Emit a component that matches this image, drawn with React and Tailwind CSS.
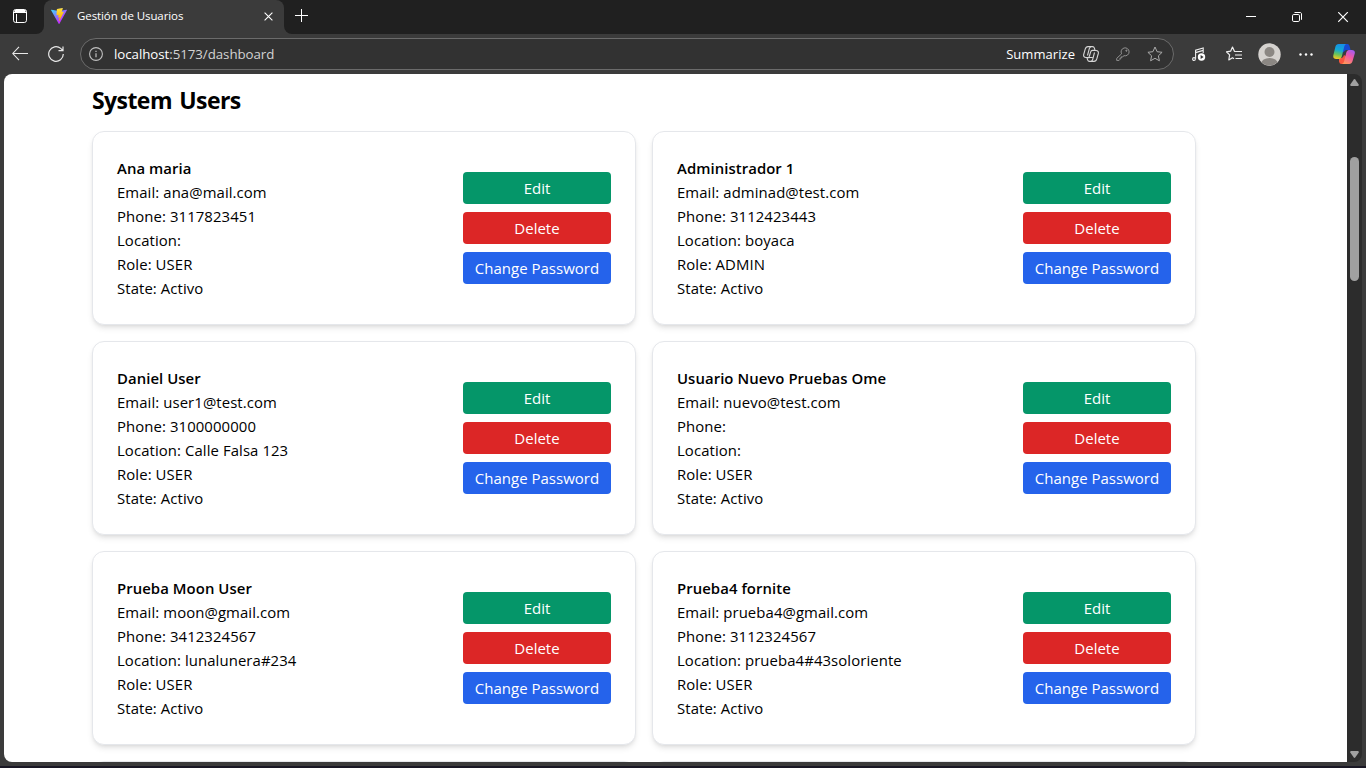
import React from "react";

const users = [
  { name: "Ana maria", email: "ana@mail.com", phone: "3117823451", location: "", role: "USER" },
  { name: "Administrador 1", email: "adminad@test.com", phone: "3112423443", location: "boyaca", role: "ADMIN" },
  { name: "Daniel User", email: "user1@test.com", phone: "3100000000", location: "Calle Falsa 123", role: "USER" },
  { name: "Usuario Nuevo Pruebas Ome", email: "nuevo@test.com", phone: "", location: "", role: "USER" },
  { name: "Prueba Moon User", email: "moon@gmail.com", phone: "3412324567", location: "lunalunera#234", role: "USER" },
  { name: "Prueba4 fornite", email: "prueba4@gmail.com", phone: "3112324567", location: "prueba4#43soloriente", role: "USER" },
];

const card = "h-[194px] shrink-0 rounded-xl border border-gray-200 bg-white p-6 shadow-md";
const button = "h-8 w-[148px] rounded text-center leading-8 text-white whitespace-nowrap";

function UserCard({ user }) {
  return (
    <article className={card + " flex items-center justify-between"}>
      <div className="whitespace-nowrap leading-6 tracking-[0.006em]">
        <h3 className="font-semibold tracking-[0.004em]">{user.name}</h3>
        <p>Email: {user.email}</p>
        <p>Phone: {user.phone}</p>
        <p>Location: {user.location}</p>
        <p>Role: {user.role}</p>
        <p>State: Activo</p>
      </div>
      <div className="flex flex-col gap-2 text-[15px]">
        <button className={button + " bg-[#059669]"}>Edit</button>
        <button className={button + " bg-[#dc2626]"}>Delete</button>
        <button className={button + " bg-[#2563eb]"}>Change Password</button>
      </div>
    </article>
  );
}

function ViteLogo() {
  return (
    <svg className="h-4 w-4" viewBox="0 0 256 257">
      <defs>
        <linearGradient id="viteBody" x1="-.8%" x2="57.6%" y1="7.6%" y2="78.4%">
          <stop offset="0" stopColor="#41D1FF" />
          <stop offset="1" stopColor="#BD34FE" />
        </linearGradient>
        <linearGradient id="viteBolt" x1="43.4%" x2="50.3%" y1="2.2%" y2="89%">
          <stop offset="0" stopColor="#FFEA83" />
          <stop offset=".08" stopColor="#FFDD35" />
          <stop offset="1" stopColor="#FFA800" />
        </linearGradient>
      </defs>
      <path fill="url(#viteBody)" d="M255.153 37.938 134.897 252.976c-2.483 4.44-8.862 4.466-11.382.048L.875 37.958c-2.746-4.814 1.371-10.646 6.827-9.67l120.385 21.517a6.537 6.537 0 0 0 2.322-.004l117.867-21.483c5.438-.991 9.574 4.796 6.877 9.62Z" />
      <path fill="url(#viteBolt)" d="M185.432.063 96.44 17.501a3.268 3.268 0 0 0-2.634 3.014l-5.474 92.456a3.268 3.268 0 0 0 3.997 3.378l24.777-5.718c2.318-.535 4.413 1.507 3.936 3.838l-7.361 36.047c-.495 2.426 1.782 4.5 4.151 3.78l15.304-4.649c2.372-.72 4.652 1.36 4.15 3.788l-11.698 56.621c-.732 3.542 3.979 5.473 5.943 2.437l1.313-2.028 72.516-144.72c1.215-2.423-.88-5.186-3.54-4.672l-25.505 4.922c-2.396.462-4.435-1.77-3.759-4.114l16.646-57.705c.677-2.35-1.37-4.583-3.769-4.113Z" />
    </svg>
  );
}

function TitleBar() {
  return (
    <div className="flex h-[34px] bg-[#3b3b3b] text-white">
      <div className="flex w-11 items-center justify-center rounded-br-lg bg-[#202020] pb-[2px] pr-1">
        <svg className="h-[14px] w-[14px]" viewBox="0 0 14 14" fill="none" stroke="currentColor">
          <rect x=".5" y=".5" width="13" height="13" rx="2.2" />
          <path d="M1 3.5h12" />
          <path d="M1.500 2h11" strokeWidth="2" />
          <path d="M3.500 5v8" />
        </svg>
      </div>
      <div className="flex w-[240px] bg-[#202020]">
        <div className="flex w-full items-center rounded-t-lg bg-[#3b3b3b] pb-[2px] pl-[7px] pr-[11px]">
          <ViteLogo />
          <span className="ml-[10px] grow whitespace-nowrap text-[11.500px] leading-4 tracking-[-0.008em]">Gestión de Usuarios</span>
          <svg className="h-[9px] w-[9px]" viewBox="0 0 9 9" stroke="currentColor" strokeWidth="1.1">
            <path d="m.6.6 7.8 7.8M8.4.6.6 8.4" />
          </svg>
        </div>
      </div>
      <div className="flex grow rounded-bl-lg bg-[#202020]">
        <svg className="ml-[11px] mt-[9px] h-[13px] w-[13px]" viewBox="0 0 13 13" stroke="currentColor">
          <path d="M6.5 0v13M0 6.5h13" />
        </svg>
        <div className="ml-auto flex pr-[17px] pt-3">
          <svg className="h-[11px] w-[11px]" viewBox="0 0 11 11" stroke="currentColor">
            <path d="M0 4.500h10" />
          </svg>
          <svg className="ml-[35px] h-[11px] w-[11px]" viewBox="0 0 11 11" fill="none" stroke="currentColor">
            <rect x=".5" y="2.5" width="7" height="7" rx="1.3" />
            <path d="M2.500.5H8c.9 0 1.500.6 1.500 1.500v5.800" />
          </svg>
          <svg className="ml-[35px] h-[11px] w-[11px]" viewBox="0 0 11 11" stroke="currentColor" strokeWidth="1.2">
            <path d="m.2.2 9.600 9.600M9.800.2.2 9.800" />
          </svg>
        </div>
      </div>
    </div>
  );
}

const starPath = "m8 1 2.1 4.7 5 .6-3.700 3.500 1 5L8 12.300l-4.400 2.500 1-5L.9 6.300l5-.6z";

function AddressBar() {
  return (
    <div className="flex h-10 items-center bg-[#3b3b3b] text-white">
      <svg className="ml-3 h-4 w-4" viewBox="0 0 16 16" fill="none" stroke="#e8e8e8" strokeWidth="1.1">
        <path d="M7 .8 .8 7.500 7 14.200M.8 7.500H16" />
      </svg>
      <svg className="ml-5 h-4 w-4" viewBox="0 0 16 16" fill="none" stroke="#e8e8e8" strokeWidth="1.2">
        <path d="M15.300 8A7.300 7.300 0 1 1 12.700 2.400L15 4.600M15 .4v4.300h-4.500" />
      </svg>
      <div className="ml-4 flex h-8 w-[1094px] items-center rounded-full border border-[#6b6b6b] bg-[#323232] pl-2 pr-[10px]">
        <svg className="h-[14px] w-[14px]" viewBox="0 0 14 14" fill="none" stroke="#c0c0c0">
          <circle cx="7" cy="7" r="6.400" strokeWidth="1.100" />
          <path d="M7 6.200v4M7 3.700v1.300" strokeWidth="1.200" />
        </svg>
        <span className="ml-[11px] whitespace-nowrap text-[13.300px] leading-5 tracking-[-0.004em]">
          localhost<span className="text-[#d2d2d2]">:5173/dashboard</span>
        </span>
        <span className="ml-auto whitespace-nowrap text-[13px] leading-5 tracking-[0.004em]">Summarize</span>
        <svg className="ml-2 h-4 w-4" viewBox="0 0 16 16" fill="none" stroke="#d6d6d6" strokeWidth="1.100" strokeLinejoin="round">
          <path d="M5.200 11.500H3C1.200 11.500.3 10.200.7 8.500l1.500-5.400C2.700 1.300 3.500.6 5 .6h4.500c1.100 0 1.600.5 1.900 1.500l.7 2.300H9.500c-1.100 0-1.600.6-1.900 1.700L6.400 10c-.2 1-.5 1.500-1.200 1.500z" />
          <path d="M10.800 4.500H13c1.800 0 2.700 1.300 2.300 3l-1.500 5.400c-.5 1.800-1.300 2.500-2.800 2.500H6.500c-1.100 0-1.600-.5-1.900-1.500l-.7-2.300h2.600M9.500 11.500H6M8 .7C7 .9 6.600 1.600 6.300 2.700L4.500 9.500M8 15.300c1-.2 1.400-.9 1.700-2l1.800-6.800" />
        </svg>
        <svg className="ml-[17px] h-[14px] w-[14px]" viewBox="0 0 14 14" fill="none" stroke="#929292" strokeLinejoin="round">
          <path d="M5.600 6.800A4 4 0 1 1 8 8.700l-1.300 1.100H5.300v1.300H4v1.300l-.9 1H.7v-2z" />
          <circle cx="10.400" cy="3.700" r=".6" fill="#929292" />
        </svg>
        <svg className="ml-[17px] h-4 w-4" viewBox="0 0 16 16" fill="none" stroke="#ababab" strokeLinejoin="round">
          <path d={starPath} />
        </svg>
      </div>
      <svg className="ml-[18px] h-[14px] w-[14px]" viewBox="0 0 14 14" fill="none" stroke="#efefef" strokeWidth="1.100">
        <path d="M3.600 11.800V3.200L11.200 1v5M3.600 5.600l7.600-2.200" />
        <circle cx="2" cy="12" r="1.400" />
        <circle cx="9.500" cy="10" r="3.700" fill="#fff" stroke="none" />
        <path d="m8.600 8 3 2-3 2z" fill="#333" stroke="none" />
      </svg>
      <svg className="ml-5 h-4 w-4" viewBox="0 0 16 16" fill="none" stroke="#efefef" strokeWidth="1.200" strokeLinejoin="round">
        <path d="m10 5.500-1.600-.2L6.500 1 4.600 5.200l-4.200.6 3.200 3.100L2.800 14l3.700-2.200 1.500.9M10 5.500h6M9 9h7M9.500 12.500H16" />
      </svg>
      <svg className="ml-4 h-[23px] w-[23px]" viewBox="0 0 23 23">
        <defs><clipPath id="avatar"><circle cx="11.500" cy="11.500" r="11" /></clipPath></defs>
        <circle cx="11.500" cy="11.500" r="11.200" fill="#d5d2cf" />
        <circle cx="11.500" cy="9" r="5" fill="#8b8783" />
        <ellipse cx="11.500" cy="20.300" rx="8.200" ry="5.300" fill="#8b8783" clipPath="url(#avatar)" />
      </svg>
      <svg className="ml-[18px] h-[3px] w-[14px]" viewBox="0 0 14 3" fill="#fff">
        <circle cx="1.500" cy="1.500" r="1.200" /><circle cx="7" cy="1.500" r="1.200" /><circle cx="12.500" cy="1.500" r="1.200" />
      </svg>
      <svg className="ml-5 h-[22px] w-[22px]" viewBox="0 0 22 22">
        <defs>
          <linearGradient id="coolRibbon" x1=".5" x2=".3" y1="0" y2="1">
            <stop offset="0" stopColor="#168fe8" /><stop offset=".4" stopColor="#13a9d4" /><stop offset=".7" stopColor="#69c35a" /><stop offset="1" stopColor="#f6c921" />
          </linearGradient>
          <linearGradient id="warmRibbon" x1=".8" x2=".3" y1="0" y2="1">
            <stop offset="0" stopColor="#a35cf3" /><stop offset=".45" stopColor="#ef57a7" /><stop offset="1" stopColor="#ff9659" />
          </linearGradient>
        </defs>
        <path fill="#1749d2" d="M10 1h4c1.400 0 2.100.6 2.500 1.900L17.600 7h-3.800c-1.700 0-2.500 1-3 2.500L9.500 8z" />
        <path fill="#f8553d" d="M6 15h2c1.500 0 2.400-1 3-3l3 2-1.500 5c-.5 1.500-1 2-2.500 2H8.500c-1.500 0-2-.8-2.500-2.500z" />
        <path fill="url(#coolRibbon)" d="M5.800 1H13.500c-1.300.3-1.900 1.300-2.300 2.700L8.900 13.200C8.300 15.400 7 16 5.200 16H3.300C.8 16-.2 14.400.4 12L2.400 3.800C3 1.800 3.900 1 5.800 1z" />
        <path fill="url(#warmRibbon)" d="M16.200 21H8.800c1.300-.3 1.900-1.200 2.300-2.700l2.200-8.700C13.900 7.600 15.200 7 17 7h1.800c2.500 0 3.500 1.500 2.900 3.800l-2.200 7.500c-.7 2-1.500 2.700-3.300 2.700z" />
      </svg>
    </div>
  );
}

export default function App() {
  return (
    <div className="flex h-[768px] w-[1366px] flex-col overflow-hidden bg-[#3b3b3b] font-['Open_Sans','Noto_Sans',sans-serif]">
      <TitleBar />
      <AddressBar />
      <div className="mx-1 flex h-[688px] overflow-hidden rounded-lg">
        <main className="h-full w-[1343px] overflow-hidden bg-white pl-[88px] pt-[10px] text-[14.900px] text-black">
          <h2 className="mb-[15px] whitespace-nowrap text-[23px] font-bold leading-8 tracking-[-0.025em] [word-spacing:2px]">System Users</h2>
          <div className="grid w-[1104px] grid-cols-2 gap-4">
            {users.map((user) => <UserCard key={user.email} user={user} />)}
            <article className={card} />
            <article className={card} />
          </div>
        </main>
        <div className="flex w-[15px] flex-col items-center bg-[#2c2c2c] pb-1 pt-[5px]">
          <svg className="h-[7px] w-[9px] shrink-0" viewBox="0 0 10 7" preserveAspectRatio="none" fill="#a0a0a0"><path d="M4.200.5Q5-.4 5.800.5l3.900 5Q10 7 8.700 7H1.300Q0 7 .3 5.500z" /></svg>
          <div className="mt-[71px] h-[124px] w-[9px] shrink-0 rounded-full bg-[#a0a0a0]" />
          <svg className="mt-auto h-[7px] w-[9px] shrink-0" viewBox="0 0 10 7" preserveAspectRatio="none" fill="#a0a0a0"><path d="M4.200 6.500Q5 7.400 5.800 6.500l3.900-5Q10 0 8.700 0H1.300Q0 0 .3 1.500z" /></svg>
        </div>
      </div>
      <div className="mt-1 h-0.5 bg-[#191724]" />
    </div>
  );
}
